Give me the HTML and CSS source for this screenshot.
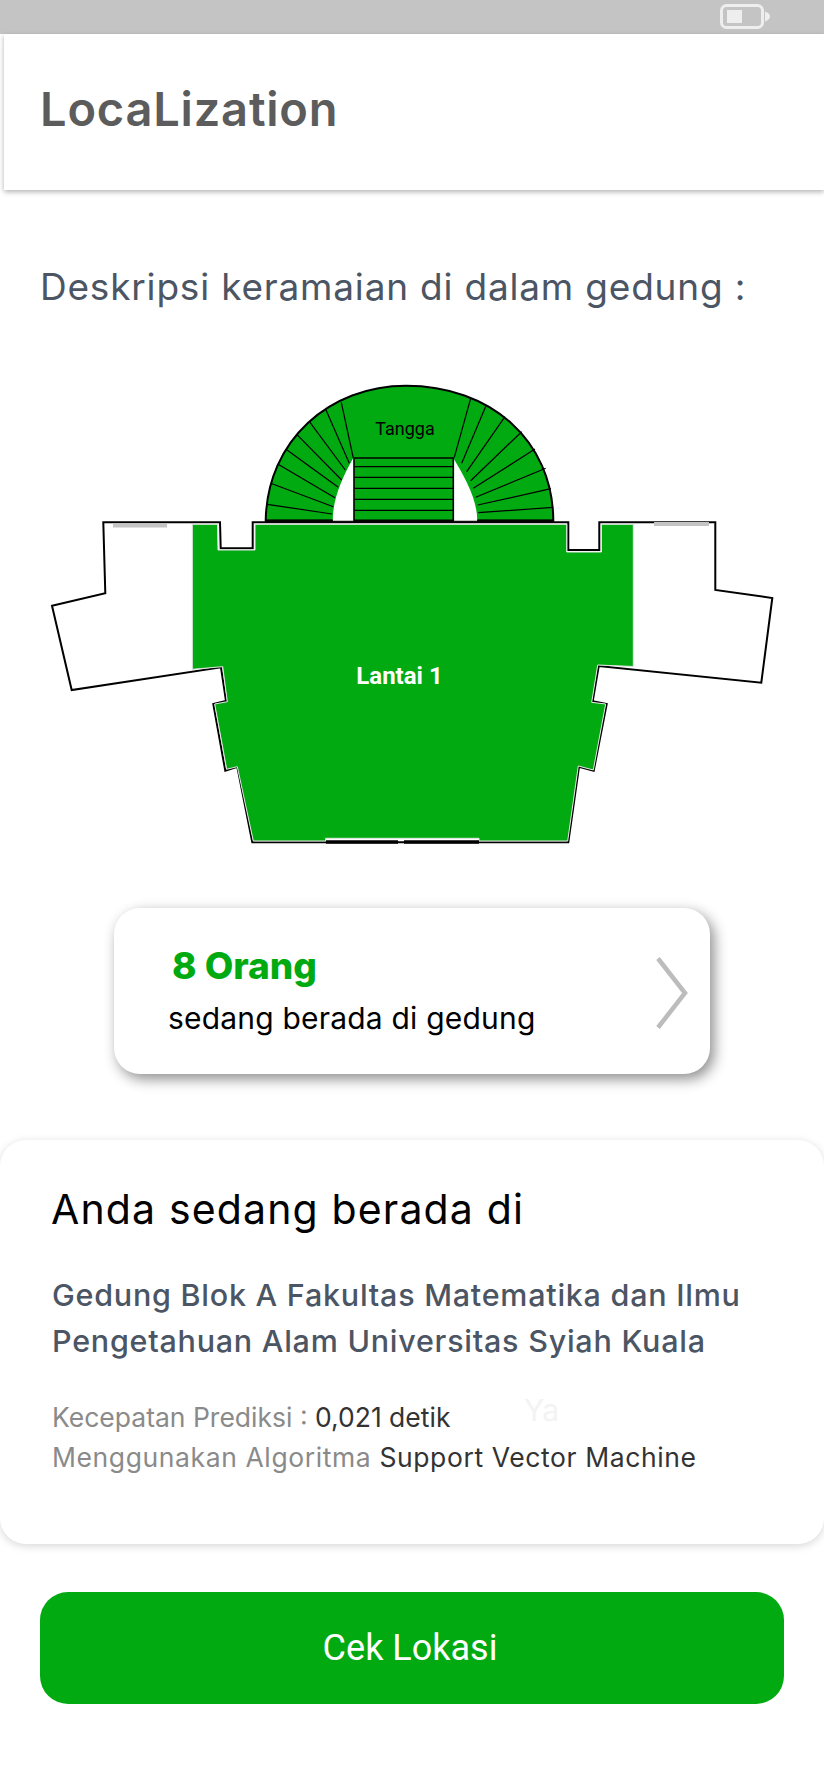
FILE: index.html
```html
<!DOCTYPE html>
<html lang="id">
<head>
<meta charset="utf-8">
<title>LocaLization</title>
<link rel="stylesheet" href="styles.css">
</head>
<body>
<div class="status-bar">
  <svg class="battery" viewBox="0 0 50 25" width="50" height="25">
    <rect x="1.5" y="1.5" width="41" height="22" rx="5" fill="none" stroke="#eeeeee" stroke-width="3"/>
    <rect x="7" y="6" width="15" height="13" fill="#eeeeee"/>
    <path d="M45 7.500c3 1 5 2.800 5 5s-2 4-5 5z" fill="#eeeeee"/>
  </svg>
</div>
<header class="app-header"><h1 class="app-title">LocaLization</h1></header>
<main>
  <p class="lead">Deskripsi keramaian di dalam gedung :</p>
  <svg class="floorplan" viewBox="0 370 824 490" width="824" height="490">
    <path class="outline" d="M103.300 522.300L105.300 593.300L52 605.700L71.700 690L221 667.300L226 701L213.300 704L225.300 770.700L237.300 766.700L252.300 842.300H568.300L579 766.700L593.700 770.700L606.700 704L592.700 701.300L598.700 666L761.300 682.700L772.300 598L715.300 590V522.300H599.300V550H568.300V522.300H252.700V548.300H220.700L220 522.300Z"/>
    <polygon class="zone" points="192.300,524.300 217.500,524.300 218,550 255,550 255,524.300 566.700,524.300 566.700,552 601.500,552 601.500,524.300 633.300,524.300 633.300,666.500 597.700,665 591.700,702.300 605.700,704 593.300,770 578.300,766 567.700,841 479,841 479,838.300 325.700,838.300 325.700,841 253.300,841 237.300,766.700 226.700,769.300 214.700,704 227.300,701.700 222.700,666.700 192.300,669.300"/>
    <path class="door" d="M326 842H398M404 842H479"/>
    <path class="wall-note" d="M113 525.500H167M654 524H709"/>
    <path class="zone-stairs" d="M265.700 520.700C267 440 330 385.700 406 385.700C490 385.700 553 440 553.300 520.700Z"/>
    <path class="well" d="M353.300 458C342 478 333 498 332.700 520.700H354V458ZM453.300 458C465 478 477 498 477.300 520.700H453.300V458Z"/>
    <path class="steps" d="M267.300 504.300L332 514M270.700 483.300L333.300 506.700M277.700 464L335 497.700M286 449.300L338.300 487.300M296.700 434.300L341.700 480M310 422.300L345.300 470M326 410L349.300 463.300M341.300 402.300L353.300 458M470.700 398.300L454.300 457.300M486 405.700L461.700 463.300M505 416.700L466.700 471.700M521.700 431.700L470.700 480.700M535 449L473.300 488.300M545.700 468.300L475.700 497.300M551 488.700L477.700 505M553.300 507.300L478.300 512.700"/>
    <path class="steps-block" d="M354 458H453.300V520.700H354Z"/>
    <path class="steps" d="M354 466.700H453.300M354 477.300H453.300M354 488.300H453.300M354 499.300H453.300M354 510.300H453.300"/>
    <path class="base" d="M265.700 521H332.700M354 521H453.300M477.300 521H553.300"/>
    <text class="label-stairs" x="405" y="435">Tangga</text>
    <text class="label-floor" x="399.500" y="684">Lantai 1</text>
  </svg>
  <section class="count-card">
    <div class="count-text">
      <div class="count-num">8 Orang</div>
      <div class="count-sub">sedang berada di gedung</div>
    </div>
    <svg class="chevron" viewBox="0 0 32 72" width="32" height="72"><path d="M2 1.500L29 36L2 70.500" fill="none" stroke="#bcbcbc" stroke-width="4.500"/></svg>
  </section>
  <section class="info-card">
    <h2 class="info-title">Anda sedang berada di</h2>
    <p class="info-place">Gedung Blok A Fakultas Matematika dan Ilmu<br>Pengetahuan Alam Universitas Syiah Kuala</p>
    <div class="info-meta">
      <p class="meta-line meta-line-tight"><span class="meta-key">Kecepatan Prediksi :</span> <span class="meta-val">0,021 detik</span><span class="ghost">Ya</span></p>
      <p class="meta-line"><span class="meta-key">Menggunakan Algoritma</span> <span class="meta-val">Support Vector Machine</span></p>
    </div>
  </section>
  <button class="cta" type="button">Cek Lokasi</button>
</main>
</body>
</html>
```
FILE: styles.css
```css
* { box-sizing: border-box; }
html, body { margin: 0; background: #fff; }
body { width: 824px; height: 1784px; overflow: hidden; font-family: "Inter", "Open Sans", sans-serif; }
p, h1, h2 { margin: 0; }

.status-bar { height: 34px; background: #c4c4c4; display: flex; justify-content: flex-end; padding: 4px 54px 0 0; }
.battery { display: block; }

.app-header { margin-left: 4px; height: 156px; background: #fff; box-shadow: 0 2px 5px rgba(0,0,0,.3); display: flex; align-items: center; padding-left: 36px; }
.app-title { font-size: 47px; font-weight: 600; color: #5c5c5c; letter-spacing: .8px; line-height: 1; padding-bottom: 7px; }

.lead { margin: 75px 0 0 40px; font-size: 37px; line-height: 44px; color: #4b5563; white-space: nowrap; letter-spacing: .8px; }

.floorplan { display: block; margin-top: 61px; }
.outline { fill: #fff; stroke: #000; stroke-width: 2; }
.zone { fill: #02aa12; stroke: #e6e6e6; stroke-width: 1; }
.door { fill: none; stroke: #000; stroke-width: 3.500; }
.wall-note { fill: none; stroke: #c4c4c4; stroke-width: 4; }
.zone-stairs { fill: #02aa12; stroke: #000; stroke-width: 2; }
.well { fill: #fff; }
.steps { fill: none; stroke: #000; stroke-width: 1.200; }
.steps-block { fill: #02aa12; stroke: #000; stroke-width: 1.600; }
.base { fill: none; stroke: #000; stroke-width: 3; }
.label-stairs { font-family: "Roboto", sans-serif; font-size: 18px; text-anchor: middle; fill: #000; }
.label-floor { font-family: "Roboto", sans-serif; font-size: 24px; font-weight: 700; text-anchor: middle; fill: #fff; }

.count-card { margin: 48px 0 0 114px; width: 596px; height: 166px; background: #fff; border-radius: 26px; box-shadow: 4px 5px 14px rgba(0,0,0,.45); display: flex; align-items: center; justify-content: space-between; padding: 4px 22px 0 54px; }
.count-num { font-size: 37px; font-weight: 800; color: #02aa12; line-height: 46px; margin: -7px 0 0 4px; letter-spacing: 0; }
.count-sub { font-size: 30px; color: #000; line-height: 38px; margin-top: 10px; letter-spacing: .2px; }
.chevron { display: block; }

.info-card { margin-top: 66px; height: 404px; background: #fff; border-radius: 26px; box-shadow: 0 2px 8px rgba(0,0,0,.16); padding: 44px 40px 0 52px; }
.info-title { font-size: 41px; font-weight: 400; color: #000; line-height: 50px; letter-spacing: 1.150px; margin-left: -1px; }
.info-place { margin-top: 38px; font-size: 30.500px; font-weight: 500; color: #4b5563; line-height: 45.500px; white-space: nowrap; letter-spacing: .75px; }
.info-meta { margin-top: 34px; }
.meta-line { position: relative; font-size: 26.500px; line-height: 40px; white-space: nowrap; letter-spacing: .6px; }
.meta-line-tight { letter-spacing: 0; }
.meta-key { color: #8a8a8a; }
.meta-val { color: #333; }
.ghost { position: absolute; left: 472px; top: -7px; font-size: 30px; color: #f3f3f3; }

.cta { display: block; margin: 48px 0 0 40px; width: 744px; height: 112px; border: 0; border-radius: 28px; background: #02aa12; color: #fff; font-family: "Roboto", sans-serif; font-size: 36px; text-align: center; padding: 0 4px 0 0; }
```
